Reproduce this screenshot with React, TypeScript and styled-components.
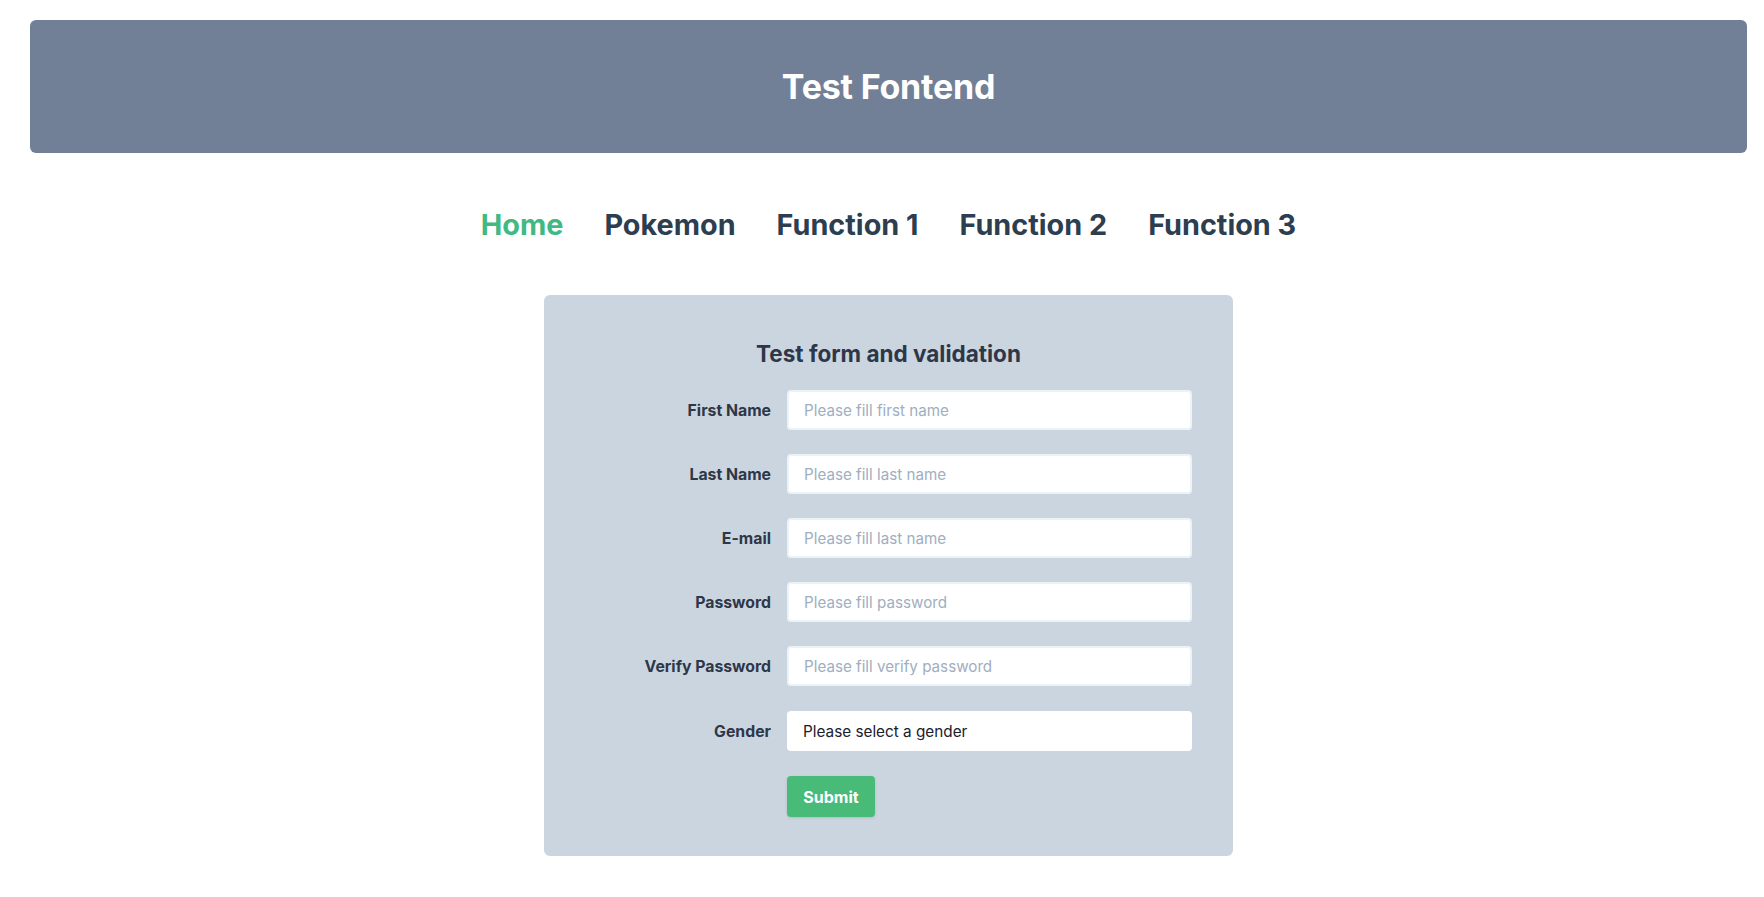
import React from "react";
import styled, { createGlobalStyle } from "styled-components";

const Global = createGlobalStyle`
  html, body { margin: 0; padding: 0; background: #ffffff; }
  body { font-family: Inter, "Noto Sans", Arial, sans-serif; color: #2d3748; -webkit-font-smoothing: antialiased; }
  * { box-sizing: border-box; }
`;

const Page = styled.div`
  padding: 20px 17px 40px 30px;
`;

const Header = styled.header`
  background: #718096;
  border-radius: 6px;
  height: 133px;
  display: flex;
  align-items: center;
  justify-content: center;
`;

const Title = styled.h1`
  margin: 0;
  color: #ffffff;
  font-size: 34px;
  font-weight: 700;
  letter-spacing: -0.2px;
`;

const Nav = styled.nav`
  display: flex;
  justify-content: center;
  gap: 41px;
  padding: 51px 0 49px;
`;

const NavLink = styled.a<{ $active?: boolean }>`
  font-size: 28.8px;
  line-height: 42px;
  font-weight: 700;
  text-decoration: none;
  color: ${(p) => (p.$active ? "#42b983" : "#2c3e50")};
  cursor: pointer;
`;

const Card = styled.div`
  width: 689px;
  margin: 0 auto;
  background: #cbd5e0;
  border-radius: 6px;
  padding: 40px 41px 39px;
`;

const FormTitle = styled.h2`
  margin: 5px 0 22px;
  text-align: center;
  font-size: 22.5px;
  line-height: 28px;
  font-weight: 700;
  color: #2d3748;
`;

const Row = styled.div`
  display: flex;
  align-items: center;
  margin-bottom: 24px;
`;

const LabelCol = styled.div`
  width: 202px;
  padding-right: 16px;
  text-align: right;
`;

const Label = styled.label`
  font-size: 15.8px;
  font-weight: 700;
  color: #2d3748;
`;

const FieldCol = styled.div`
  width: 405px;
`;

const Input = styled.input`
  display: block;
  width: 100%;
  height: 40px;
  border: 2px solid #edf2f7;
  border-radius: 4px;
  background: #ffffff;
  padding: 0 15px;
  font-family: inherit;
  font-size: 15.2px;
  color: #4a5568;
  outline: none;
  &::placeholder { color: #a0aec0; }
`;

const Select = styled.select`
  display: block;
  width: 100%;
  height: 40px;
  margin: 1px 0;
  border: none;
  border-radius: 4px;
  background: #ffffff;
  padding: 0 16px;
  font-family: inherit;
  font-size: 15.3px;
  color: #1a202c;
  appearance: none;
  outline: none;
`;

const ButtonRow = styled.div`
  display: flex;
`;

const Spacer = styled.div`
  width: 202px;
`;

const Button = styled.button`
  height: 41px;
  width: 88px;
  padding: 0;
  background: #48bb78;
  color: #ffffff;
  border: none;
  border-radius: 4px;
  font-family: inherit;
  font-size: 16px;
  font-weight: 700;
  box-shadow: 0 1px 3px rgba(0,0,0,0.12);
  cursor: pointer;
`;

const fields = [
  { label: "First Name", placeholder: "Please fill first name", type: "text" },
  { label: "Last Name", placeholder: "Please fill last name", type: "text" },
  { label: "E-mail", placeholder: "Please fill last name", type: "email" },
  { label: "Password", placeholder: "Please fill password", type: "password" },
  { label: "Verify Password", placeholder: "Please fill verify password", type: "password" },
];

export default function App() {
  return (
    <>
      <Global />
      <Page>
        <Header>
          <Title>Test Fontend</Title>
        </Header>
        <Nav>
          <NavLink $active>Home</NavLink>
          <NavLink>Pokemon</NavLink>
          <NavLink>Function 1</NavLink>
          <NavLink>Function 2</NavLink>
          <NavLink>Function 3</NavLink>
        </Nav>
        <Card>
          <FormTitle>Test form and validation</FormTitle>
          {fields.map((f) => (
            <Row key={f.label}>
              <LabelCol>
                <Label>{f.label}</Label>
              </LabelCol>
              <FieldCol>
                <Input type={f.type} placeholder={f.placeholder} />
              </FieldCol>
            </Row>
          ))}
          <Row>
            <LabelCol>
              <Label>Gender</Label>
            </LabelCol>
            <FieldCol>
              <Select defaultValue="">
                <option value="">Please select a gender</option>
                <option value="m">Male</option>
                <option value="f">Female</option>
              </Select>
            </FieldCol>
          </Row>
          <ButtonRow>
            <Spacer />
            <Button>Submit</Button>
          </ButtonRow>
        </Card>
      </Page>
    </>
  );
}
